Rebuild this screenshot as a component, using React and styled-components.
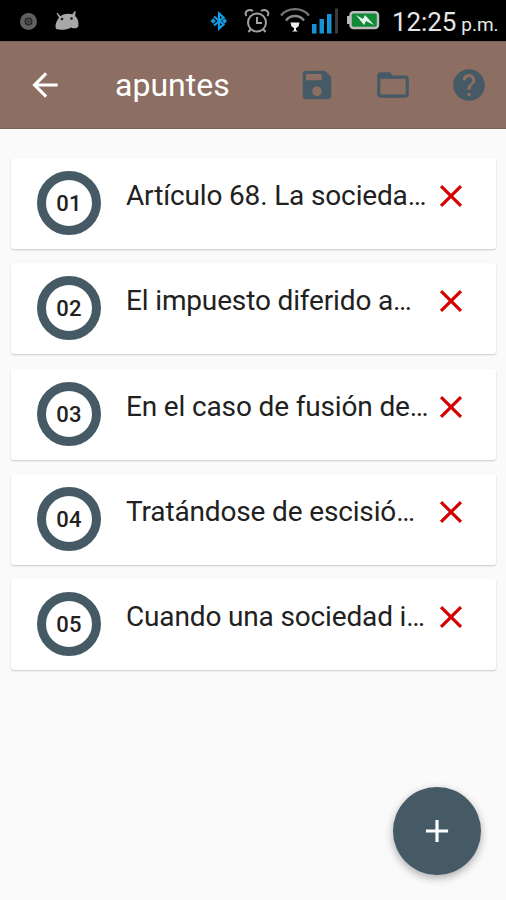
import React from "react";
import styled, { createGlobalStyle } from "styled-components";
import { MdArrowBack, MdSave, MdFolderOpen, MdHelp, MdClose, MdAdd } from "react-icons/md";

const slate = "#455a64";

const GlobalStyle = createGlobalStyle`
  * { box-sizing: border-box; }
  body { margin: 0; background: #fafafa; font-family: Roboto, "Noto Sans", sans-serif; }
  button { border: 0; padding: 0; background: none; font: inherit; }
  svg { display: block; flex: none; }
`;

const Screen = styled.div`
  position: relative;
  width: 506px;
  height: 900px;
  overflow: hidden;
  background: #fafafa;
`;

const StatusBar = styled.div`
  display: flex;
  align-items: center;
  height: 41px;
  padding: 0 9px 0 18px;
  background: #000;
`;

const StatusGroup = styled.div`
  display: flex;
  align-items: center;
  margin-left: ${(p) => (p.$end ? "auto" : 0)};
`;

const StatusIcon = styled.span`
  display: flex;
  margin-left: ${(p) => p.$gap || 0}px;
  margin-top: ${(p) => p.$drop || 0}px;
`;

const Clock = styled.div`
  display: flex;
  align-items: baseline;
  width: 105px;
  margin-top: 5px;
  margin-left: 11px;
  color: #e6e6e6;
  font-size: 26px;
  line-height: 40px;
  letter-spacing: -0.1px;
  white-space: nowrap;
`;

const Meridiem = styled.span`
  margin-left: 5px;
  font-size: 19px;
  letter-spacing: 0;
`;

const AppBar = styled.header`
  display: flex;
  align-items: center;
  height: 88px;
  padding: 0 18px 0 26px;
  background: #8d6e63;
  border-bottom: 1px solid #7d6056;
  box-shadow: inset 0 1px 0 #7b5f55;
`;

const Title = styled.h1`
  flex: 1;
  margin: 0 0 0 51px;
  color: #fff;
  font-size: 32px;
  font-weight: 400;
  line-height: 40px;
  letter-spacing: 0;
`;

const Actions = styled.div`
  display: flex;
  gap: 38px;
`;

const IconButton = styled.button`
  display: flex;
  color: ${(p) => p.$color};
`;

const NoteList = styled.ul`
  display: flex;
  flex-direction: column;
  gap: 14.4px;
  margin: 0;
  padding: 28.8px 10px 0 11px;
  list-style: none;
`;

const NoteCard = styled.li`
  display: flex;
  height: 91px;
  padding: 13px 26px 0;
  background: #fff;
  border-radius: 3px;
  box-shadow: 0 1px 2px rgba(0, 0, 0, 0.2);
`;

const NumberRing = styled.div`
  display: flex;
  align-items: center;
  justify-content: center;
  flex: none;
  width: 64px;
  height: 64px;
  padding-top: 1px;
  border: 9px solid ${slate};
  border-radius: 50%;
  color: #212121;
  font-size: 22px;
  font-weight: 500;
  letter-spacing: 0.2px;
`;

const NoteText = styled.div`
  width: 306px;
  margin-top: 5px;
  margin-left: 25px;
  color: #212121;
  font-size: 28px;
  line-height: 40px;
  letter-spacing: -0.15px;
  white-space: nowrap;
`;

const DeleteButton = styled(IconButton)`
  height: 38px;
  margin-top: 6px;
`;

const AddButton = styled.button`
  position: absolute;
  right: 25px;
  bottom: 25px;
  display: flex;
  align-items: center;
  justify-content: center;
  width: 88px;
  height: 88px;
  border-radius: 50%;
  color: #fff;
  background: ${slate};
  box-shadow: 0 3px 8px rgba(0, 0, 0, 0.32);
`;

const notes = [
  { id: "01", text: "Artículo 68. La socieda…" },
  { id: "02", text: "El impuesto diferido a…" },
  { id: "03", text: "En el caso de fusión de…" },
  { id: "04", text: "Tratándose de escisió…" },
  { id: "05", text: "Cuando una sociedad i…" },
];

const DiscIcon = () => (
  <svg width="20" height="20" viewBox="0 0 20 20" fill="none">
    <circle cx="10.5" cy="10.5" r="8.5" fill="#606060" />
    <circle cx="10.5" cy="10.5" r="3.2" stroke="#292929" strokeWidth="1.6" fill="#555" />
    <circle cx="10.5" cy="10.5" r="1" fill="#222" />
  </svg>
);

const DroidIcon = () => (
  <svg width="26" height="22" viewBox="0 0 26 22">
    <path d="M2 19c-1-3-.5-6 1.500-9L5 7.600 2.500 3.300l1-.6 3 3.500C10 3.600 15 3.300 18.400 4.300L20.700 1l1 .5-.6 4.500c3 2.300 3.800 6 3.200 10.500-1.500 2.200-5 2.400-7 .9C13 19.700 7 20.500 2 19Z" fill="#a8a8a8" />
    <circle cx="8" cy="9" r="1.300" fill="#171717" />
    <circle cx="17.500" cy="8.500" r="1.300" fill="#171717" />
  </svg>
);

const BluetoothIcon = () => (
  <svg width="18" height="20" viewBox="0 0 18 20" fill="none" stroke="#139ce4" strokeWidth="2.200">
    <path d="m4 5.500 9.500 8L9 17.500v-15l4.500 4L4 14.500" />
    <path d="m.5 10 2.700-2.700L5.900 10l-2.700 2.700ZM12 10l2.500-2.700L17 10l-2.500 2.700Z" fill="#139ce4" stroke="none" />
  </svg>
);

const AlarmIcon = () => (
  <svg width="26" height="26" viewBox="0 0 26 26" fill="none" stroke="#a1a1a1" strokeWidth="2">
    <circle cx="13" cy="14.500" r="9" />
    <path d="M13 9v6h5M2.500 8C-.5 3.500 5 .5 9 3M23.500 8c3-4.500-2.500-7.500-6.500-5M7 21l-2.500 3M19 21l2.500 3" />
  </svg>
);

const WifiIcon = () => (
  <svg width="30" height="26" viewBox="0 0 30 26" fill="none">
    <path d="M1 7.500C8-.9 22-.9 29 7.500" stroke="#777" strokeWidth="2.200" />
    <path d="M6 12.500c4.500-6 13.500-6 18 0" stroke="#898989" strokeWidth="2.400" />
    <path d="M10.500 14.500h9l-1 4-2.500 1.500v2l2 1.500h-6l2-1.500v-2l-2.500-1.500Z" fill="#eee" />
  </svg>
);

const SignalIcon = () => (
  <svg width="27" height="26" viewBox="0 0 27 26">
    <path d="M0 16h4.500v9.500H0ZM7.500 11H12v14.500H7.500ZM15 6h4.500v19.500H15Z" fill="#1593d5" />
    <path d="M23 .5h3v25h-3Z" fill="#3b3b3b" />
  </svg>
);

const BatteryIcon = () => (
  <svg width="34" height="20" viewBox="0 0 34 20">
    <path d="M0 5h3v8H0Z" fill="#b9b9b9" />
    <rect x="3.500" y="1.300" width="27.500" height="15.700" rx="3" fill="#108a39" stroke="#bdbdbd" strokeWidth="2.500" />
    <path d="m9 4 7 4 2-4 9 10-8-4-2 4Z" fill="#e7f4e9" />
  </svg>
);

export default function App() {
  return (
    <>
      <GlobalStyle />
      <Screen>
        <StatusBar>
          <StatusGroup>
            <StatusIcon><DiscIcon /></StatusIcon>
            <StatusIcon $gap={16}><DroidIcon /></StatusIcon>
          </StatusGroup>
          <StatusGroup $end>
            <StatusIcon $drop={1}><BluetoothIcon /></StatusIcon>
            <StatusIcon $gap={16} $drop={1}><AlarmIcon /></StatusIcon>
            <StatusIcon $gap={10} $drop={1}><WifiIcon /></StatusIcon>
            <StatusIcon $gap={2} $drop={1}><SignalIcon /></StatusIcon>
            <StatusIcon $gap={8}><BatteryIcon /></StatusIcon>
            <Clock>12:25<Meridiem>p.m.</Meridiem></Clock>
          </StatusGroup>
        </StatusBar>
        <AppBar>
          <IconButton $color="#fff" aria-label="Atrás"><MdArrowBack size={38} /></IconButton>
          <Title>apuntes</Title>
          <Actions>
            <IconButton $color={slate} aria-label="Guardar"><MdSave size={38} /></IconButton>
            <IconButton $color={slate} aria-label="Abrir"><MdFolderOpen size={38} /></IconButton>
            <IconButton $color={slate} aria-label="Ayuda"><MdHelp size={38} /></IconButton>
          </Actions>
        </AppBar>
        <NoteList>
          {notes.map((note) => (
            <NoteCard key={note.id}>
              <NumberRing>{note.id}</NumberRing>
              <NoteText>{note.text}</NoteText>
              <DeleteButton $color="#d50000" aria-label="Eliminar"><MdClose size={38} /></DeleteButton>
            </NoteCard>
          ))}
        </NoteList>
        <AddButton aria-label="Añadir"><MdAdd size={38} /></AddButton>
      </Screen>
    </>
  );
}
